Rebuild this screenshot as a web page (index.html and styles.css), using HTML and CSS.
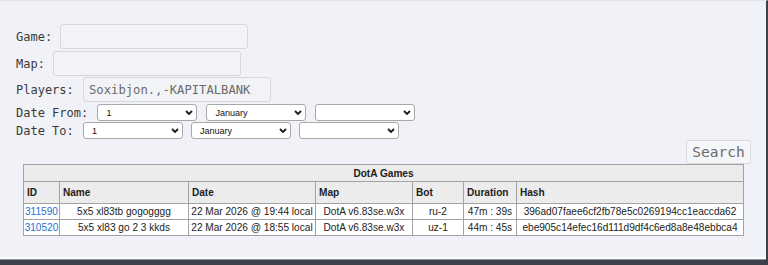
FILE: index.html
```html
<!DOCTYPE html>
<html>
<head>
<meta charset="utf-8">
<link rel="stylesheet" href="styles.css">
</head>
<body>
<div class="frame">
  <div class="page">
    <form class="search-form">
      <div class="row row-game"><label class="lbl">Game: </label><input class="txt w188" type="text"></div>
      <div class="row row-map"><label class="lbl">Map: </label><input class="txt w188" type="text"></div>
      <div class="row row-players"><label class="lbl">Players: </label><input class="txt w188" type="text" value="Soxibjon.,-KAPITALBANK"></div>
      <div class="row row-date"><label class="lbl">Date From: </label><span class="sel"><select><option>1</option></select><svg class="chev" viewBox="0 0 8 5" width="8" height="5"><path d="M1 1 L4 4 L7 1" fill="none" stroke="#1a1a1a" stroke-width="1.8"/></svg></span><span class="sel"><select><option>January</option></select><svg class="chev" viewBox="0 0 8 5" width="8" height="5"><path d="M1 1 L4 4 L7 1" fill="none" stroke="#1a1a1a" stroke-width="1.8"/></svg></span><span class="sel"><select><option></option></select><svg class="chev" viewBox="0 0 8 5" width="8" height="5"><path d="M1 1 L4 4 L7 1" fill="none" stroke="#1a1a1a" stroke-width="1.8"/></svg></span></div>
      <div class="row row-date2"><label class="lbl">Date To: </label><span class="sel"><select><option>1</option></select><svg class="chev" viewBox="0 0 8 5" width="8" height="5"><path d="M1 1 L4 4 L7 1" fill="none" stroke="#1a1a1a" stroke-width="1.8"/></svg></span><span class="sel"><select><option>January</option></select><svg class="chev" viewBox="0 0 8 5" width="8" height="5"><path d="M1 1 L4 4 L7 1" fill="none" stroke="#1a1a1a" stroke-width="1.8"/></svg></span><span class="sel"><select><option></option></select><svg class="chev" viewBox="0 0 8 5" width="8" height="5"><path d="M1 1 L4 4 L7 1" fill="none" stroke="#1a1a1a" stroke-width="1.8"/></svg></span></div>
      <div class="btn-row"><button type="button" class="btn">Search</button></div>
    </form>
    <table class="games">
      <colgroup>
        <col class="c-id"><col class="c-name"><col class="c-date"><col class="c-map"><col class="c-bot"><col class="c-dur"><col class="c-hash">
      </colgroup>
      <thead>
        <tr class="title-row"><th colspan="7">DotA Games</th></tr>
        <tr class="head-row"><th>ID</th><th>Name</th><th>Date</th><th>Map</th><th>Bot</th><th>Duration</th><th>Hash</th></tr>
      </thead>
      <tbody>
        <tr><td><a href="#">311590</a></td><td>5x5 xl83tb gogogggg</td><td>22 Mar 2026 @ 19:44 local</td><td>DotA v6.83se.w3x</td><td>ru-2</td><td>47m : 39s</td><td>396ad07faee6cf2fb78e5c0269194cc1eaccda62</td></tr>
        <tr><td><a href="#">310520</a></td><td>5x5 xl83 go 2 3 kkds</td><td>22 Mar 2026 @ 18:55 local</td><td>DotA v6.83se.w3x</td><td>uz-1</td><td>44m : 45s</td><td>ebe905c14efec16d111d9df4c6ed8a8e48ebbca4</td></tr>
      </tbody>
    </table>
  </div>
  <div class="footer"></div>
</div>
</body>
</html>
```

FILE: styles.css
```css
html, body {
  margin: 0;
  padding: 0;
  background: #f0f2f7;
}
.frame {
  width: 768px;
  height: 265px;
  box-sizing: border-box;
  display: flex;
  flex-direction: column;
  border-top: 1px solid #e2e4e9;
  border-right: 2px solid #3c4048;
  overflow: hidden;
}
.page {
  flex: 1;
  padding: 23px 15px 0 16px;
}
.search-form {
  margin: 0;
}
.row {
  display: flex;
  align-items: center;
  font-family: "DejaVu Sans Mono", monospace;
  font-size: 12px;
  color: #3a3a3a;
}
.row-game { height: 25px; }
.row-map { height: 25px; margin-top: 2px; }
.row-players { height: 25px; margin-top: 1px; }
.row-date { height: 17px; margin-top: 2px; }
.row-date2 { height: 17px; margin-top: 1px; }
.lbl {
  white-space: pre;
}
.txt {
  box-sizing: border-box;
  height: 25px;
  margin: 0 0 0 1px;
  padding: 0 5px;
  border: 1px solid #d6d8dd;
  border-radius: 3px;
  background: #f2f3f7;
  font-family: "DejaVu Sans Mono", monospace;
  font-size: 12.2px;
  color: #6a6a6a;
  outline: none;
}
.w188 { width: 188px; }
.row-players .txt { margin-left: 2px; }
.sel {
  position: relative;
  display: inline-block;
  height: 17px;
  margin-left: 2px;
  margin-right: 7px;
}
.row-date2 .sel { margin-right: 6px; }
.sel select {
  appearance: none;
  -webkit-appearance: none;
  box-sizing: border-box;
  width: 100px;
  height: 17px;
  margin: 0;
  padding: 0 0 0 8px;
  border: 1px solid #a9a9a9;
  border-radius: 3px;
  background: #ffffff;
  font-family: "Liberation Sans", Arial, sans-serif;
  font-size: 9px;
  color: #111;
}
.chev {
  position: absolute;
  right: 4px;
  top: 6px;
}
.btn-row {
  display: flex;
  justify-content: flex-end;
  margin-top: 1px;
}
.btn {
  box-sizing: border-box;
  width: 65px;
  height: 24px;
  padding: 0;
  margin: 0;
  border: 1px solid #d8dade;
  border-radius: 2px;
  background: #f5f6f9;
  font-family: "DejaVu Sans Mono", monospace;
  font-size: 14.5px;
  color: #6b6b6b;
}
.games {
  width: 720px;
  margin: 0 auto;
  border-collapse: collapse;
  table-layout: fixed;
  font-family: "Liberation Sans", Arial, sans-serif;
  font-size: 10.1px;
  color: #222;
  background: #fff;
}
.c-id { width: 36px; }
.c-name { width: 129px; }
.c-date { width: 127px; }
.c-map { width: 97px; }
.c-bot { width: 51px; }
.c-dur { width: 53px; }
.c-hash { width: 227px; }
.games th, .games td {
  border: 1px solid #a3a3a3;
  white-space: nowrap;
  overflow: hidden;
}
.games th {
  background: #ececec;
  font-weight: bold;
  text-align: left;
  padding: 0 3px;
}
.title-row th {
  height: 16px;
  text-align: center;
}
.head-row th {
  height: 21px;
}
.games td {
  height: 15px;
  padding: 0;
  text-align: center;
}
.games a {
  color: #2373d3;
  text-decoration: none;
}
.footer {
  height: 6px;
  border-top: 2px solid #fbfbfc;
  background: #3c4048;
  box-shadow: inset 0 1px 0 #8c95a3;
}
```
